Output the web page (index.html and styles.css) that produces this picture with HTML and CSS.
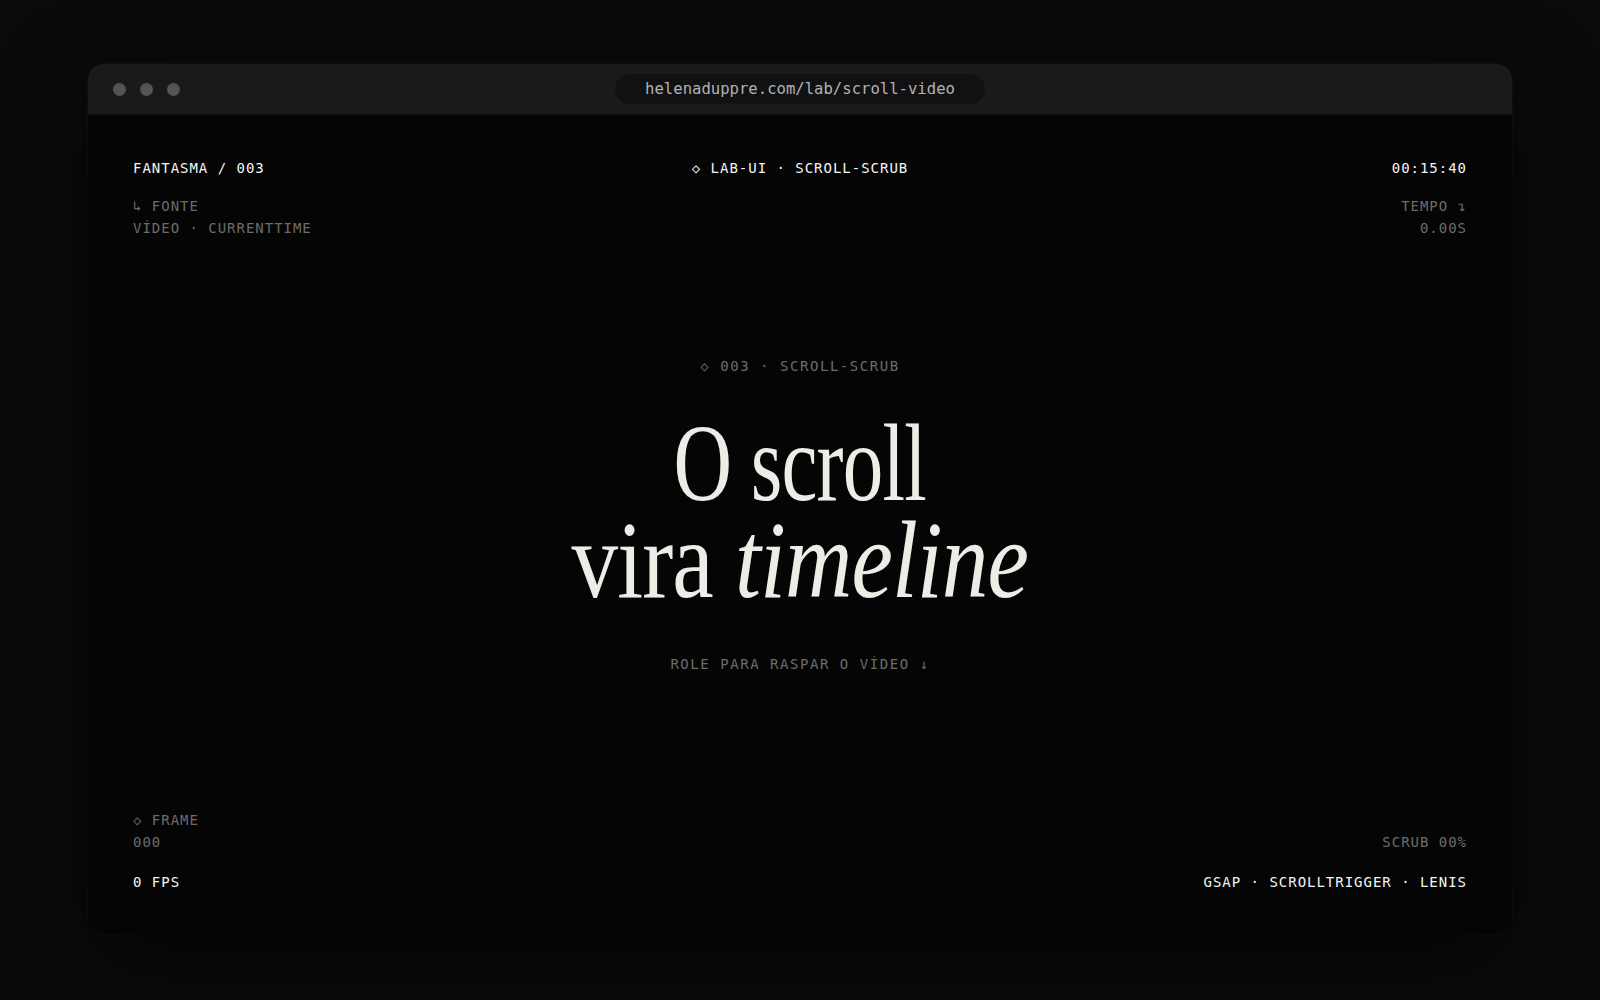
FILE: index.html
```html
<!DOCTYPE html>
<html lang="pt-BR">
<head>
    <meta charset="UTF-8">
    <meta name="viewport" content="width=device-width, initial-scale=1.0">
    <title>Fantasma / 003 — scroll-scrub</title>
    <link rel="stylesheet" href="styles.css">
</head>
<body>
    <div class="window">
        <div class="titlebar">
            <div class="dots"><span></span><span></span><span></span></div>
            <div class="url">helenaduppre.com/lab/scroll-video</div>
        </div>
        <main class="stage">
            <header class="top">
                <div class="row three">
                    <span class="hi">FANTASMA / 003</span>
                    <span class="hi mid">◇ LAB-UI · SCROLL-SCRUB</span>
                    <span class="hi end" id="clock">00:15:40</span>
                </div>
                <div class="row meta">
                    <div>↳ FONTE<br>VÍDEO · CURRENTTIME</div>
                    <div class="end">TEMPO ↴<br><span id="time">0.00S</span></div>
                </div>
            </header>

            <section class="hero">
                <p class="kicker">◇ 003 · SCROLL-SCRUB</p>
                <h1>
                    <span class="line one">O scroll</span>
                    <span class="line two">vira <em>timeline</em></span>
                </h1>
                <p class="hint">ROLE PARA RASPAR O VÍDEO ↓</p>
            </section>

            <footer class="bottom">
                <div class="row meta">
                    <div>◇ FRAME<br><span id="frame">000</span></div>
                    <div class="end">SCRUB <span id="scrub">00%</span></div>
                </div>
                <div class="row">
                    <span class="hi"><span id="fps">0</span> FPS</span>
                    <span class="hi end">GSAP · SCROLLTRIGGER · LENIS</span>
                </div>
            </footer>
        </main>
    </div>
</body>
</html>
```

FILE: styles.css
```css
* { box-sizing: border-box; }
html, body { margin: 0; }
body {
    background: #0b0b0b;
    font-family: "DejaVu Sans Mono", "Liberation Mono", monospace;
    color: #f1f1f1;
    padding: 64px 0 0 88px;
    height: 1000px;
}

.window {
    width: 1424px;
    height: 871px;
    border-radius: 16px;
    overflow: hidden;
    background: #050505;
    display: flex;
    flex-direction: column;
    box-shadow: 0 30px 90px rgba(0, 0, 0, 0.7), 0 0 0 1px rgba(255, 255, 255, 0.03);
}

.titlebar {
    height: 51px;
    flex: none;
    background: #1a1a1c;
    border-bottom: 1px solid #0e0e10;
    display: flex;
    align-items: center;
    justify-content: center;
    position: relative;
}
.dots { position: absolute; left: 25px; top: 19px; display: flex; gap: 14px; }
.dots span { width: 13px; height: 13px; border-radius: 50%; background: #545456; }
.url {
    width: 370px;
    height: 30px;
    border-radius: 15px;
    background: #111113;
    color: #b2b2b4;
    font-size: 15.6px;
    line-height: 30px;
    text-align: center;
}

.stage {
    flex: 1;
    display: flex;
    flex-direction: column;
    padding: 42px 45px 42px 45px;
    font-size: 14px;
    line-height: 22px;
    letter-spacing: 0.07em;
}

/* two columns by default, three for the top bar */
.row { display: grid; grid-template-columns: 1fr 1fr; align-items: end; }
.row.three { grid-template-columns: 1fr auto 1fr; }
.row.meta { color: #6c6c6c; }
.hi { color: #f4f4f4; }
.mid { text-align: center; }
.end { text-align: right; }

.top .meta { margin-top: 16px; }
.bottom .row + .row { margin-top: 18px; }

.hero {
    flex: 1;
    display: flex;
    flex-direction: column;
    align-items: center;
    justify-content: center;
    padding-bottom: 18px;
}
.kicker, .hint {
    margin: 0;
    color: #6c6c6c;
    letter-spacing: 0.11em;
}
h1 {
    margin: 37px 0 45px;
    font-family: "Liberation Serif", "Times New Roman", serif;
    font-weight: 400;
    font-size: 111px;
    line-height: 97px;
    letter-spacing: -0.01em;
    color: #eeece6;
    text-align: center;
}
h1 .line { display: block; white-space: nowrap; }
h1 .one { transform: scaleX(0.73); }
h1 .two { transform: scaleX(0.84); }
h1 em { font-style: italic; }
```
